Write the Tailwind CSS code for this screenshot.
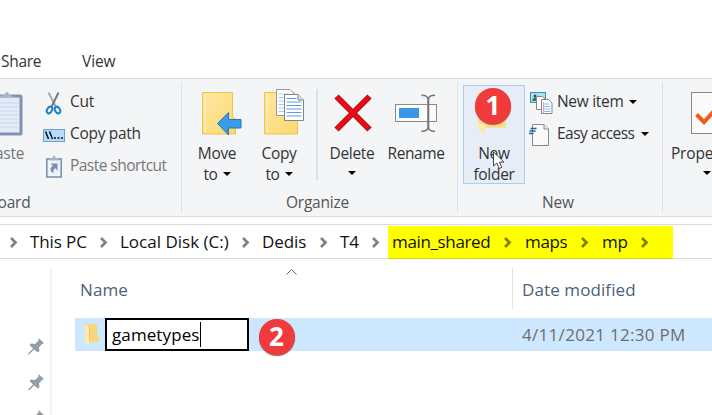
<!DOCTYPE html>
<html lang="en">
<head>
<meta charset="utf-8">
<title>File Explorer</title>
<script src="https://cdn.jsdelivr.net/npm/@tailwindcss/browser@4"></script>
</head>
<body class="w-[712px] h-[415px] overflow-hidden bg-white font-['Open_Sans','Noto_Sans',sans-serif] text-[15.5px] leading-5 text-[#333] whitespace-nowrap">

<!-- Ribbon tabs -->
<nav class="h-[78px] pt-[51px] flex pl-px">
  <span class="w-[81px] tracking-[-0.3px]">Share</span>
  <span class="tracking-[-0.1px]">View</span>
</nav>

<!-- Ribbon -->
<section class="h-[139px] w-[712px] flex overflow-hidden border-y border-[#d9dadc] bg-[#f4f5f7]">
  <!-- Clipboard -->
  <div class="w-[181px] shrink-0 flex flex-col">
    <div class="flex h-[113px]">
      <div class="w-[43px] pt-[6px]">
        <svg class="block" width="43" height="57" viewBox="0 85 43 57">
          <rect x="-10" y="96" width="31" height="38" fill="#e4ebf7" stroke="#8291b2" stroke-width="3" rx="1"/>
          <path d="M0 103h18M0 107h18M0 111h18M0 115h18M0 119h18M0 123h18M0 127h18" stroke="#c9d5ea" stroke-width="1.2"/>
          <path d="M0 97.500h13.500c-1-2-3-2.500-4.500-3C8.500 91 5.500 91 5 94.500L0 96z" fill="#a9b5cd"/>
        </svg>
        <div class="-ml-[14px] mt-px tracking-[-0.3px] text-[#777]">Paste</div>
      </div>
      <div class="pt-3 tracking-[-0.3px]">
        <div class="flex h-8">
          <svg width="27" height="24" viewBox="43 89 27 24" fill="none">
            <path d="M48.500 90.500 56.500 106" stroke="#a7a9ac" stroke-width="2"/>
            <path d="M58.500 90.500 51.500 105" stroke="#77797c" stroke-width="2"/>
            <ellipse cx="49.500" cy="108" rx="2.400" ry="3.500" transform="rotate(30 49.500 108)" stroke="#1b83cc" stroke-width="2"/>
            <ellipse cx="57.500" cy="108" rx="2.400" ry="3.500" transform="rotate(-30 57.500 108)" stroke="#1b83cc" stroke-width="2"/>
          </svg>
          <span>Cut</span>
        </div>
        <div class="flex h-8">
          <svg width="27" height="24" viewBox="43 121 27 24">
            <rect x="43.500" y="127.500" width="21" height="12" fill="#b7dcfb" stroke="#6f9fcd"/>
            <path d="m45.500 129.500 3 7.500m1-7.500 3 7.500" stroke="#111" stroke-width="1.500"/>
            <path d="M54 136h2M57.500 136h2M61 136h2" stroke="#111" stroke-width="1.500"/>
          </svg>
          <span>Copy path</span>
        </div>
        <div class="flex h-8 text-[#777]">
          <svg width="27" height="24" viewBox="43 153 27 24">
            <rect x="46.800" y="157" width="14.400" height="18" fill="#eef2fa" stroke="#8191b3" stroke-width="1.600"/>
            <path d="M49 158.500h10l-2-2.500h-1.500c0-3-3-3-3 0H51z" fill="#a9b5cd"/>
            <path d="M50.500 161.500h7v7l-2.300-2.300c-1.600 1-2 2.500-1.800 4.800-4-1.500-3.500-5.500-.5-7.200z" fill="#7d8db0"/>
          </svg>
          <span class="tracking-[-0.54px]">Paste shortcut</span>
        </div>
      </div>
    </div>
    <div class="-ml-[38px] tracking-[-0.2px] text-[#555]">Clipboard</div>
  </div>

  <!-- Organize -->
  <div class="my-[3px] w-[276px] shrink-0 border-l border-[#e0e1e4] pt-[3px]">
    <div class="flex h-[107px] text-center">
      <div class="w-[62px] ml-[4px] shrink-0 tracking-[-0.3px]">
        <svg class="block" width="62" height="57" viewBox="186 85 62 57">
          <defs><linearGradient id="f" x2="1" y2="1"><stop stop-color="#ffe8a3"/><stop offset="1" stop-color="#fcd772"/></linearGradient></defs>
          <path d="M202.500 92.500h30v24l3 3v14.500h-33z" fill="url(#f)" stroke="#e9c64f"/>
          <path d="M205.500 95v37" stroke="#fff0c0"/>
          <path d="M217.500 123.500 228.500 112.500v7h12.500v8.500h-12.500v7z" fill="#3a9be9" stroke="#2478bd"/>
        </svg>
        <div class="h-[21px] mt-px">Move</div>
        <div class="flex items-center justify-center gap-[5px]">to <svg width="8" height="4"><path d="M0 0h8L4 4z" fill="#000"/></svg></div>
      </div>
      <div class="w-[62px] shrink-0 tracking-[-0.3px]">
        <svg class="block" width="62" height="57" viewBox="248 85 62 57">
          <path d="M264.500 92.500h30v24l3 3v14.500h-33z" fill="url(#f)" stroke="#e9c64f"/>
          <path d="M267.500 95v37" stroke="#fff0c0"/>
          <path d="M276.500 89.500h13.500l5 5v21h-18.500z" fill="#fff" stroke="#9a9a9a"/>
          <path d="M278.500 94h10M278.500 97.500h7M278.500 101h7M278.500 104.500h7M278.500 108h7M278.500 111.500h7" stroke="#aecbf5"/>
          <path d="M284.500 94.500h13.500l5.500 5.500v20.500h-19z" fill="#fff" stroke="#858585"/>
          <path d="M298 94.500v5.500h5.500" fill="#ddd" stroke="#858585"/>
          <path d="M286.500 98.500h10M286.500 102h15M286.500 105.500h15M286.500 109h15M286.500 112.500h15M286.500 116h15" stroke="#5c97ef" stroke-width="1.200"/>
        </svg>
        <div class="h-[21px] mt-px">Copy</div>
        <div class="flex items-center justify-center gap-[5px]">to <svg width="8" height="4"><path d="M0 0h8L4 4z" fill="#000"/></svg></div>
      </div>
      <div class="ml-[6px] mt-1 h-[91px] w-[2px] shrink-0 bg-[#dfe0e3]"></div>
      <div class="ml-[3px] w-[62px] shrink-0 tracking-[-0.3px]">
        <svg class="block" width="62" height="57" viewBox="321 85 62 57">
          <path d="m336.500 96.500 33 33m0-33-33 33" stroke="#9c1016" stroke-width="6"/>
          <path d="m337 97 32 32m0-32-32 32" stroke="#ec0814" stroke-width="4.400"/>
        </svg>
        <div class="h-[21px] mt-px">Delete</div>
        <svg class="mx-auto mt-[7px]" width="8" height="4"><path d="M0 0h8L4 4z" fill="#000"/></svg>
      </div>
      <div class="w-[66px] shrink-0 tracking-[-0.4px]">
        <svg class="block" width="66" height="57" viewBox="383 85 66 57">
          <rect x="395.500" y="104.500" width="41" height="17" fill="#fcfcfc" stroke="#8b8b8b"/>
          <rect x="399" y="108" width="20" height="10" fill="#3a97e8"/>
          <path d="M421.500 95.300c4 0 6.500 1 6.500 4v28c0 3-2.500 4-6.500 4M435 95.300c-4 0-6.500 1-6.500 4v28c0 3 2.500 4 6.500 4" fill="none" stroke="#777" stroke-width="1.600"/>
        </svg>
        <div class="mt-px">Rename</div>
      </div>
    </div>
    <div class="pr-[4px] text-center tracking-[-0.2px] text-[#555]">Organize</div>
  </div>

  <!-- New -->
  <div class="my-[3px] w-[205px] shrink-0 border-l border-[#e0e1e4] pt-[3px]">
    <div class="flex h-[107px]">
      <div class="relative ml-[5px] h-[99px] w-[62px] shrink-0 border border-[#a6cdf3] bg-[#e7edf6] text-center tracking-[-0.3px]">
        <svg class="block" width="60" height="57" viewBox="464 86 60 57">
          <path d="M478 92h22l6 10v26h-28z" fill="#ffe08a"/>
          <path d="M478 116v13l7 5v-7h21v-8z" fill="#f9dd8e"/>
          <path d="M478 122l7 3v9l-7-5z" fill="#ffe9a8"/>
        </svg>
        <div class="h-[21px]">New</div>
        <div>folder</div>
        <div class="absolute left-[11px] top-[2px] size-[36px] rounded-full bg-[#f03a3c] text-[26px] leading-[35px] font-bold tracking-normal text-white shadow-[0_1px_1px_#9a5a5a]">1</div>
        <svg class="absolute left-[28px] top-[65px]" width="16" height="20" viewBox="0 0 16 20"><path d="M1.500 1v14l3.300-3 2.400 5.500 2.600-1.200-2.400-5.200h4.500z" fill="#fff" stroke="#333" stroke-width=".9"/></svg>
      </div>
      <div class="pl-[4px] pt-[6px] tracking-[-0.3px]">
        <div class="flex h-8">
          <svg width="28" height="24" viewBox="529 89 28 24">
            <rect x="530.500" y="90.500" width="15" height="10" fill="#a8e0f7" stroke="#3d8fb8"/>
            <path d="M532 99c1-5 6-5 7 0z" fill="#327b55"/><circle cx="535" cy="94" r="1.500" fill="#5b4630"/>
            <path d="M536.500 94.500h6l3 3v10h-9z" fill="#fff" stroke="#888"/>
            <path d="M541.500 97.500h7l3.500 3.500v10.500h-10.500z" fill="#fff" stroke="#888"/>
            <path d="M543.500 102h6M543.500 104.500h7M543.500 107h7M543.500 109.500h7" stroke="#8bb6ef"/><path d="M543.500 100v11" stroke="#e5a4ab"/>
          </svg>
          <span class="w-[67px]">New item</span>
          <svg class="ml-[5px] mt-[9px]" width="8" height="4"><path d="M0 0h8L4 4z" fill="#000"/></svg>
        </div>
        <div class="flex h-8">
          <svg width="28" height="24" viewBox="529 121 28 24">
            <path d="M532.500 122.500h11.500l4.500 4.500v16.500h-16z" fill="#fafafa" stroke="#888"/>
            <path d="M544 122.500v4.500h4.500" fill="#eee" stroke="#888"/>
            <path d="M530.500 126.500h6M529.500 129h6M528.500 131.500h5" stroke="#1d659e" stroke-width="1.300"/>
          </svg>
          <span class="w-[79px] tracking-[-0.54px]">Easy access</span>
          <svg class="ml-[5px] mt-[9px]" width="8" height="4"><path d="M0 0h8L4 4z" fill="#000"/></svg>
        </div>
      </div>
    </div>
    <div class="pr-[4px] text-center tracking-[-0.2px] text-[#555]">New</div>
  </div>

  <!-- Open -->
  <div class="my-[3px] w-[50px] shrink-0 border-l border-[#e0e1e4] pl-2 pt-[3px]">
    <svg class="block" width="41" height="57" viewBox="671 85 41 57">
      <rect x="691.500" y="92.500" width="30" height="41" fill="#fafafa" stroke="#888"/>
      <path d="m696.500 114.500 7.500 7.500 10-11" fill="none" stroke="#f45b16" stroke-width="4"/>
    </svg>
    <div class="mt-px h-[21px] w-[41px] overflow-hidden tracking-[-0.2px]">Properties</div>
    <svg class="ml-8 mt-[7px]" width="8" height="4"><path d="M0 0h8L4 4z" fill="#000"/></svg>
  </div>
</section>

<!-- Address bar -->
<section class="mt-[7px] flex h-[35px] border-y border-[#d9d9d9] text-[17px] leading-[33px] text-[#111] tracking-[-0.1px]">
  <svg class="w-[30px]" height="33" viewBox="0 225 30 33"><path d="m11 238 4.500 4.500-4.500 4.500" fill="none" stroke="#808080" stroke-width="2.700"/></svg>
  <span class="w-[60px]">This PC</span>
  <svg class="w-[30px]" height="33" viewBox="0 225 30 33"><path d="m11 238 4.500 4.500-4.500 4.500" fill="none" stroke="#808080" stroke-width="2.700"/></svg>
  <span class="w-[112px] tracking-normal">Local Disk (C:)</span>
  <svg class="w-[30px]" height="33" viewBox="0 225 30 33"><path d="m11 238 4.500 4.500-4.500 4.500" fill="none" stroke="#808080" stroke-width="2.700"/></svg>
  <span class="w-[48px]">Dedis</span>
  <svg class="w-[30px]" height="33" viewBox="0 225 30 33"><path d="m11 238 4.500 4.500-4.500 4.500" fill="none" stroke="#808080" stroke-width="2.700"/></svg>
  <span class="w-[22px]">T4</span>
  <svg class="w-[26px]" height="33" viewBox="0 225 26 33"><path d="m11 238 4.500 4.500-4.500 4.500" fill="none" stroke="#808080" stroke-width="2.700"/></svg>
  <div class="-mb-px mt-px flex h-[33px] w-[285px] bg-[#ff0] border-b border-[#d9d900] pl-1 leading-[31px] tracking-[-0.35px]">
    <span class="w-[102px]">main_shared</span>
    <svg class="w-[31px]" height="32" viewBox="0 226 31 32"><path d="m11 238 4.500 4.500-4.500 4.500" fill="none" stroke="#808000" stroke-width="2.700"/></svg>
    <span class="w-[46px]">maps</span>
    <svg class="w-[31px]" height="32" viewBox="0 226 31 32"><path d="m11 238 4.500 4.500-4.500 4.500" fill="none" stroke="#808000" stroke-width="2.700"/></svg>
    <span class="w-[29px]">mp</span>
    <svg class="w-[30px]" height="32" viewBox="0 226 30 32"><path d="m11 238 4.500 4.500-4.500 4.500" fill="none" stroke="#808000" stroke-width="2.700"/></svg>
  </div>
</section>

<!-- Body -->
<main class="flex h-[156px] pt-[9px] text-[17px] tracking-[0.1px]">
  <aside class="h-[147px] w-[52px] border-r-2 border-[#f3f3f3]">
    <svg class="block" width="50" height="147" viewBox="0 268 50 147">
      <defs><g id="pin"><path d="m38.500 338 5.500 5-2 1-3 3.500.5 3.500-1.500 1.500-4-3-4.500 4.500-1.500.5.500-1.500 4.500-4.500-3.500-3.500 1.500-1.500 4 .5 3.500-3.500z" fill="#929ea6"/></g></defs>
      <use href="#pin"/><use href="#pin" y="36"/><use href="#pin" y="72"/>
    </svg>
  </aside>
  <div class="w-[660px] pl-[23px]">
    <header class="flex h-[50px] text-[#4c607a]">
      <div class="flex h-[41px] w-[438px] border-r border-[#e2e2e2] pl-[5px] pt-[12px]">
        <span class="w-[206px]">Name</span>
        <svg class="-mt-[12px]" width="12" height="8" viewBox="286 268 12 8"><path d="m286.500 274.500 5-5 5 5" fill="none" stroke="#666"/></svg>
      </div>
      <span class="pl-[9px] pt-[12px]">Date modified</span>
    </header>
    <div class="flex h-[33px] bg-[#cde7ff] leading-[34px]">
      <svg width="30" height="33" viewBox="75 318 30 33">
        <path d="M85 324h12v12l2 1v5h-14z" fill="#f8d778"/>
        <path d="M85 324l4 3v15l-1 3-3-3z" fill="#ffeab0"/>
        <path d="M89.500 327v13" stroke="#edc65f"/>
      </svg>
      <div class="flex h-[33px] w-[144px] items-center border-2 border-black bg-white pl-[5px] text-black">
        <span class="w-[88px]">gametypes</span>
        <span class="h-[25px] w-px bg-black"></span>
      </div>
      <div class="ml-[9.500px] mt-px size-[36px] rounded-full bg-[#f03a3c] text-center text-[26px] leading-[35px] font-bold tracking-normal text-white shadow-[0_1px_1px_#9a5a5a]">2</div>
      <span class="ml-[227.500px] tracking-[0.3px] text-[#6d6d6d]">4/11/2021 12:30 PM</span>
    </div>
  </div>
</main>
</body>
</html>
